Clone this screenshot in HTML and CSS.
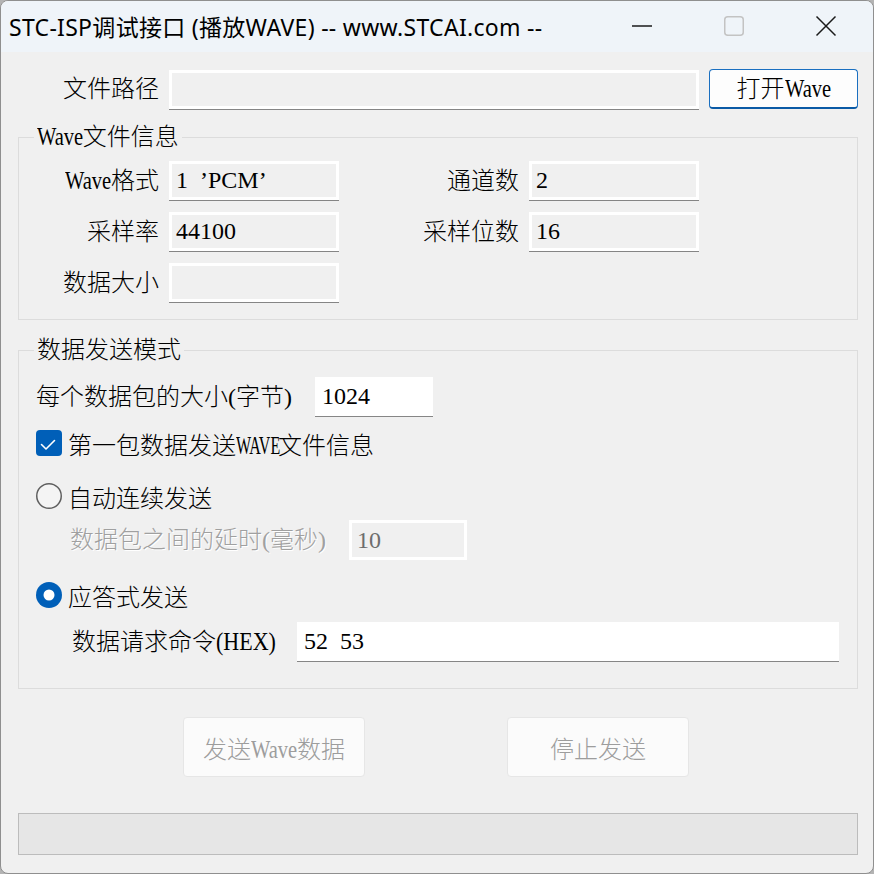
FILE: index.html
```html
<!DOCTYPE html>
<html lang="zh-CN">
<head>
<meta charset="utf-8">
<title>STC-ISP调试接口 (播放WAVE)</title>
<link rel="stylesheet" href="styles.css">
</head>
<body>
<div class="window">
  <header class="titlebar">
    <div class="title">STC-ISP调试接口 (播放WAVE) -- www.STCAI.com --</div>
    <div class="caption">
      <span class="cap-btn"><svg width="22" height="4" viewBox="0 0 22 4"><path d="M1 2H21" stroke="#1a1a1a" stroke-width="1.5"/></svg></span>
      <span class="cap-btn"><svg width="22" height="22" viewBox="0 0 22 22"><rect x="1.75" y="1.75" width="18.5" height="18.5" rx="3" fill="none" stroke="#c3c3c3" stroke-width="1.5"/></svg></span>
      <span class="cap-btn"><svg width="22" height="22" viewBox="0 0 22 22"><path d="M1.5 1.5L20.5 20.5M20.5 1.5L1.5 20.5" stroke="#1a1a1a" stroke-width="1.5"/></svg></span>
    </div>
  </header>
  <main class="content">
    <div class="path-row">
      <span class="lbl lbl-path">文件路径</span>
      <div class="field ro path"></div>
      <button class="btn-open">打开<span class="nar">Wave</span></button>
    </div>

    <fieldset class="group info">
      <legend class="legend-info"><span class="nar">Wave</span>文件信息</legend>
      <div class="info-grid">
        <span class="lbl r"><span class="nar">Wave</span>格式</span><div class="field ro">1 ’PCM’</div>
        <span class="lbl r">通道数</span><div class="field ro">2</div>
        <span class="lbl r">采样率</span><div class="field ro">44100</div>
        <span class="lbl r">采样位数</span><div class="field ro">16</div>
        <span class="lbl r">数据大小</span><div class="field ro"></div>
      </div>
    </fieldset>

    <fieldset class="group mode">
      <legend class="legend-mode">数据发送模式</legend>
      <div class="row row-size"><span class="lbl lbl-size">每个数据包的大小(字节)</span><div class="field wh small">1024</div></div>
      <div class="row row-check">
        <svg class="box" width="26" height="26" viewBox="0 0 26 26"><rect width="26" height="26" rx="4" fill="#005fb8"/><path d="M5.5 14.5L10 19L18.5 10.5" fill="none" stroke="#fff" stroke-width="1.6" stroke-linecap="round" stroke-linejoin="round"/></svg>
        <span>第一包数据发送<span class="nar caps">WAVE</span>文件信息</span>
      </div>
      <div class="row row-auto">
        <svg class="box" width="26" height="26" viewBox="0 0 26 26"><circle cx="13" cy="13" r="12.25" fill="#f4f4f4" stroke="#5f5f5f" stroke-width="1.5"/></svg>
        <span>自动连续发送</span>
      </div>
      <div class="row row-delay"><span class="lbl lbl-size dis">数据包之间的延时(毫秒)</span><div class="field off small">10</div></div>
      <div class="row row-ack">
        <svg class="box" width="26" height="26" viewBox="0 0 26 26"><circle cx="13" cy="13" r="13" fill="#005fb8"/><circle cx="13" cy="13" r="5.5" fill="#fff"/></svg>
        <span>应答式发送</span>
      </div>
      <div class="row row-hex"><span class="lbl lbl-hex">数据请求命令<span class="nar hx">(HEX)</span></span><div class="field wh hex">52 53</div></div>
    </fieldset>

    <div class="actions">
      <button class="btn-off" disabled>发送<span class="nar">Wave</span>数据</button>
      <button class="btn-off" disabled>停止发送</button>
    </div>
    <div class="progress"></div>
  </main>
</div>
</body>
</html>
```

FILE: styles.css
```css
html, body {
  margin: 0;
  padding: 0;
}
html {
  background: #b4b4b4;
}
body {
  width: 874px;
  height: 874px;
  font-family: "Liberation Serif", "Noto Sans CJK SC", serif;
  font-size: 24px;
  font-weight: 300;
  color: #000;
}
.window {
  box-sizing: border-box;
  width: 874px;
  height: 874px;
  border: 1px solid #8f8f8f;
  border-radius: 8px;
  background: #f0f0f0;
  overflow: hidden;
  display: flex;
  flex-direction: column;
}
.titlebar {
  flex: none;
  height: 51px;
  background: #eff4f9;
  display: flex;
  align-items: center;
}
.title {
  flex: 1;
  padding-left: 8px;
  padding-bottom: 1px;
  font-family: "Noto Sans", "Noto Sans CJK SC", sans-serif;
  font-size: 23px;
  font-weight: 400;
  letter-spacing: 0.3px;
  white-space: nowrap;
  color: #000;
}
.caption {
  display: flex;
  height: 51px;
  margin-right: 1px;
}
.cap-btn {
  width: 92px;
  display: flex;
  align-items: center;
  justify-content: center;
  padding-bottom: 2px;
}
.content {
  flex: 1;
  padding: 17px 15px 0 17px;
}

/* shared */
.lbl {
  white-space: nowrap;
  line-height: 40px;
}
.r {
  text-align: right;
}
.nar {
  display: inline-block;
  font-size: 25px;
  font-weight: 400;
  transform: scaleX(0.82);
  transform-origin: 0 50%;
  margin-right: -10.5px;
}
.nar.caps {
  transform: scaleX(0.64);
  margin-right: -27px;
}
.nar.hx {
  transform: scaleX(0.88);
  margin-right: -8px;
}
.field {
  box-sizing: border-box;
  height: 40px;
  white-space: pre;
  word-spacing: 6px;
  font-weight: 400;
}
.field.ro {
  background: #f0f0f0;
  border: 3px solid #fff;
  box-shadow: 0 1px 0 #858585;
  height: 39px;
  line-height: 33px;
  padding-left: 4px;
}
.field.wh {
  background: #fff;
  border-bottom: 1px solid #868686;
  line-height: 39px;
  padding-left: 7px;
}
.field.off {
  background: #f0f0f0;
  border: 3px solid #fff;
  line-height: 34px;
  padding-left: 5px;
  color: #6d6d6d;
}

/* path row */
.path-row {
  display: flex;
  align-items: center;
  gap: 10px;
  height: 40px;
}
.lbl-path {
  width: 141px;
  text-align: right;
  flex: none;
}
.field.path {
  width: 530px;
  flex: none;
}
.btn-open {
  box-sizing: border-box;
  width: 149px;
  height: 40px;
  flex: none;
  background: #fdfdfd;
  border: 1px solid #1a6fc0;
  border-bottom: 2px solid #0a5aa6;
  border-radius: 4px;
  font: inherit;
  color: #000;
  padding: 0;
  line-height: 36px;
}

/* groups */
.group {
  margin: 0;
  border: 1px solid #dcdcdc;
  min-width: 0;
}
.group legend {
  line-height: 28px;
  padding: 0 3px;
  white-space: nowrap;
}
.info {
  margin-top: 14px;
  padding: 10px 0 16px 0;
}
.legend-info {
  margin-left: 15px;
}
.info-grid {
  display: grid;
  grid-template-columns: 140px 170px 170px 170px;
  grid-auto-rows: 40px;
  column-gap: 10px;
  row-gap: 11px;
}
.info-grid .field {
  align-self: start;
}

.mode {
  margin-top: 16px;
  padding: 13px 15px 26px 17px;
}
.legend-mode {
  margin-left: -2px;
}
.row {
  display: flex;
  align-items: center;
}
.row-size {
  height: 40px;
}
.lbl-size {
  width: 279px;
  flex: none;
}
.field.small {
  width: 118px;
  flex: none;
}
.row-check {
  margin-top: 13px;
  height: 26px;
  gap: 6px;
}
.row-auto {
  margin-top: 27px;
  height: 26px;
  gap: 6px;
}
.box {
  flex: none;
  display: block;
}
.row-delay {
  margin-top: 11px;
  height: 40px;
  padding-left: 34px;
}
.dis {
  color: #a0a0a0;
  text-shadow: 1px 1px 0 #fff;
}
.row-ack {
  margin-top: 22px;
  height: 26px;
  gap: 6px;
}
.row-hex {
  margin-top: 14px;
  height: 40px;
  padding-left: 36px;
}
.lbl-hex {
  width: 225px;
  flex: none;
}
.field.hex {
  width: 542px;
  flex: none;
}

/* actions */
.actions {
  margin-top: 28px;
  display: flex;
  justify-content: center;
  gap: 142px;
  padding-right: 4px;
}
.btn-off {
  box-sizing: border-box;
  width: 182px;
  height: 60px;
  background: #fbfbfb;
  border: 1px solid #e6e6e6;
  border-radius: 4px;
  font: inherit;
  color: #9d9d9d;
  padding: 0;
}
.progress {
  margin-top: 36px;
  height: 42px;
  box-sizing: border-box;
  background: #e6e6e6;
  border: 1px solid #bcbcbc;
}
```
